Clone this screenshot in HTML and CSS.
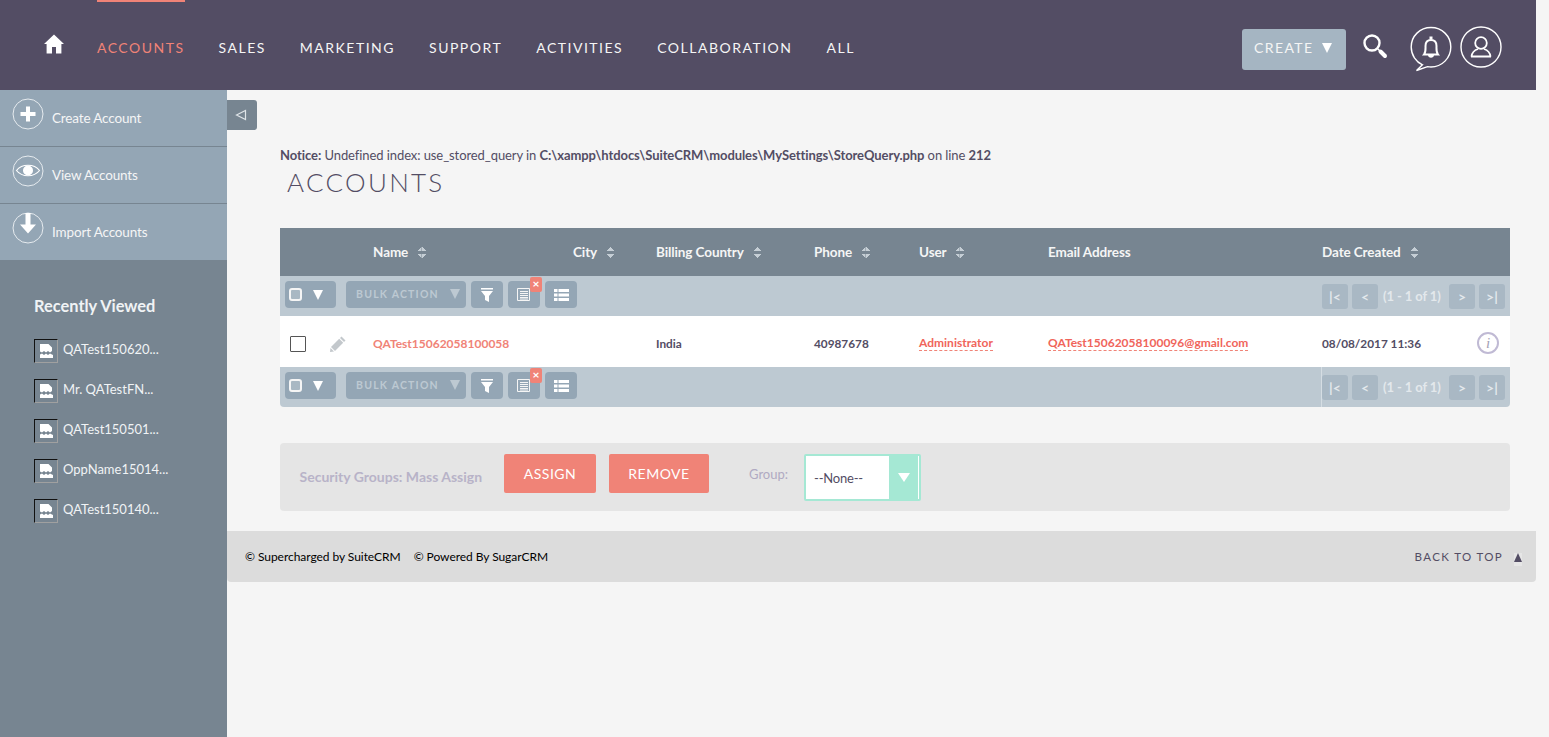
FILE: index.html
```html
<!DOCTYPE html>
<html lang="en">
<head>
    <meta charset="UTF-8">
    <title>Accounts</title>
    <link rel="stylesheet" href="styles.css">
</head>
<body>

    <header class="topbar">
        <a class="home" href="#">
            <svg width="22" height="20" viewBox="0 0 22 20"><path fill="#fff" d="M11 0.5 L21 10 L18.4 10 L18.4 19.5 L13 19.5 L13 13 L9 13 L9 19.5 L3.6 19.5 L3.6 10 L1 10 Z"/></svg>
        </a>
        <nav class="nav">
            <a class="nav-item active" href="#">ACCOUNTS</a>
            <a class="nav-item" href="#">SALES</a>
            <a class="nav-item" href="#">MARKETING</a>
            <a class="nav-item" href="#">SUPPORT</a>
            <a class="nav-item" href="#">ACTIVITIES</a>
            <a class="nav-item" href="#">COLLABORATION</a>
            <a class="nav-item" href="#">ALL</a>
        </nav>
        <div class="top-tools">
            <button class="create-btn">CREATE <span class="create-arrow"></span></button>
            <svg class="search-icon" width="26" height="26" viewBox="0 0 26 26"><circle cx="10" cy="10" r="7.5" fill="none" stroke="#fff" stroke-width="2.4"/><path d="M16 16 L23 23" stroke="#fff" stroke-width="1.5"/><path d="M18.5 18.5 L23 23" stroke="#fff" stroke-width="4" stroke-linecap="round"/></svg>
            <svg class="bell-icon" width="42" height="46" viewBox="0 0 42 46"><path fill="none" stroke="#fff" stroke-width="1.4" d="M21 1.5 C10 1.5 1.2 10 1.2 21 C1.2 29 6 36 12.5 38.8 L6.5 44.5 L17.5 40.6 C18.6 40.8 19.8 41 21 41 C32 41 40.8 32 40.8 21 C40.8 10 32 1.5 21 1.5 Z"/><path fill="none" stroke="#fff" stroke-width="2" d="M14 28.5 C16 26 15.5 23 15.5 20 C15.5 16 18 14 21 14 C24 14 26.5 16 26.5 20 C26.5 23 26 26 28 28.5 Z"/><path fill="#fff" d="M19.5 10.5 h3 v3 h-3 Z M18 29 h6 C24 32.500 18 32.500 18 29 Z"/></svg>
            <svg class="user-icon" width="42" height="42" viewBox="0 0 42 42"><circle cx="21" cy="21" r="20" fill="none" stroke="#fff" stroke-width="1.4"/><circle cx="21" cy="17" r="5.800" fill="none" stroke="#fff" stroke-width="1.8"/><path fill="none" stroke="#fff" stroke-width="1.8" d="M11.500 30.500 C12 26 15 24 18 23 M30.500 30.500 C30 26 27 24 24 23 M11 30.500 H31"/></svg>
        </div>
    </header>

    <div class="page">
        <aside class="sidebar">
            <a class="side-action" href="#">
                <svg width="32" height="32" viewBox="0 0 32 32"><circle cx="16" cy="16" r="15" fill="none" stroke="#e6ebef" stroke-width="1"/><path fill="#fff" d="M14 8.500 h4 v5.500 h5.500 v4 h-5.500 v5.500 h-4 v-5.500 h-5.500 v-4 h5.500 Z"/></svg>
                <span>Create Account</span>
            </a>
            <a class="side-action" href="#">
                <svg width="32" height="32" viewBox="0 0 32 32"><circle cx="16" cy="16" r="15" fill="none" stroke="#e6ebef" stroke-width="1"/><path fill="none" stroke="#fff" stroke-width="1.2" d="M4.500 15.500 C10 8.500 22 8.500 27.500 15.500 C22 22.500 10 22.500 4.500 15.500 Z"/><circle cx="16" cy="15.500" r="5" fill="#fff"/></svg>
                <span>View Accounts</span>
            </a>
            <a class="side-action" href="#">
                <svg width="32" height="32" viewBox="0 0 32 32"><circle cx="16" cy="16" r="15" fill="none" stroke="#e6ebef" stroke-width="1"/><path fill="#fff" d="M13.500 1 h5 v11.500 h5.500 l-8 9 l-8 -9 h5.500 Z"/></svg>
                <span>Import Accounts</span>
            </a>
            <h3 class="recent-title">Recently Viewed</h3>
            <ul class="recent-list">
                <li><span class="broken-img"><svg width="13" height="14" viewBox="0 0 13 14"><path fill="#fff" d="M0 0 h8.500 l3.500 3.500 v3.500 l-2 1.500 l-2 -1.500 l-2 1.500 l-2 -1.500 l-2 1.500 l-2 -1 Z M0 10.500 l2 -1 l2 1.500 l2 -1.500 l2 1.500 l2 -1.500 l3 1.500 v3.500 h-13 Z"/></svg></span>QATest150620...</li>
                <li><span class="broken-img"><svg width="13" height="14" viewBox="0 0 13 14"><path fill="#fff" d="M0 0 h8.500 l3.500 3.500 v3.500 l-2 1.500 l-2 -1.500 l-2 1.500 l-2 -1.500 l-2 1.500 l-2 -1 Z M0 10.500 l2 -1 l2 1.500 l2 -1.500 l2 1.500 l2 -1.500 l3 1.500 v3.500 h-13 Z"/></svg></span>Mr. QATestFN...</li>
                <li><span class="broken-img"><svg width="13" height="14" viewBox="0 0 13 14"><path fill="#fff" d="M0 0 h8.500 l3.500 3.500 v3.500 l-2 1.500 l-2 -1.500 l-2 1.500 l-2 -1.500 l-2 1.500 l-2 -1 Z M0 10.500 l2 -1 l2 1.500 l2 -1.500 l2 1.500 l2 -1.500 l3 1.500 v3.500 h-13 Z"/></svg></span>QATest150501...</li>
                <li><span class="broken-img"><svg width="13" height="14" viewBox="0 0 13 14"><path fill="#fff" d="M0 0 h8.500 l3.500 3.500 v3.500 l-2 1.500 l-2 -1.500 l-2 1.500 l-2 -1.500 l-2 1.500 l-2 -1 Z M0 10.500 l2 -1 l2 1.500 l2 -1.500 l2 1.500 l2 -1.500 l3 1.500 v3.500 h-13 Z"/></svg></span>OppName15014...</li>
                <li><span class="broken-img"><svg width="13" height="14" viewBox="0 0 13 14"><path fill="#fff" d="M0 0 h8.500 l3.500 3.500 v3.500 l-2 1.500 l-2 -1.500 l-2 1.500 l-2 -1.500 l-2 1.500 l-2 -1 Z M0 10.500 l2 -1 l2 1.500 l2 -1.500 l2 1.500 l2 -1.500 l3 1.500 v3.500 h-13 Z"/></svg></span>QATest150140...</li>
            </ul>
        </aside>

        <main class="main">
            <div class="collapse-tab">
                <svg width="12" height="12" viewBox="0 0 12 12"><path fill="none" stroke="#dfe4e8" stroke-width="1.2" d="M1.500 6 L10.500 1.500 V10.500 Z"/></svg>
            </div>
            <div class="content">
                <p class="notice"><b>Notice:</b> Undefined index: use_stored_query in <b>C:\xampp\htdocs\SuiteCRM\modules\MySettings\StoreQuery.php</b> on line <b>212</b></p>
                <h2 class="page-title">ACCOUNTS</h2>

                <div class="list-wrap">
                    <div class="list-head">
                        <span class="col col-name">Name <i class="sort"></i></span>
                        <span class="col col-city">City <i class="sort"></i></span>
                        <span class="col col-country">Billing Country <i class="sort"></i></span>
                        <span class="col col-phone">Phone <i class="sort"></i></span>
                        <span class="col col-user">User <i class="sort"></i></span>
                        <span class="col col-email">Email Address</span>
                        <span class="col col-date">Date Created <i class="sort"></i></span>
                    </div>

                    <div class="list-actions">
                        <button class="tool tool-select"><span class="mini-check"></span><span class="arrow-white"></span></button>
                        <button class="tool tool-bulk">BULK ACTION <span class="arrow-dim"></span></button>
                        <button class="tool tool-icon"><svg width="12" height="14" viewBox="0 0 12 14"><path fill="#fff" d="M0 0 h12 v1.500 h-12 Z M0 3 h12 l-4 5 v6 l-4 -2 v-4 Z"/></svg></button>
                        <button class="tool tool-icon tool-saved"><svg width="13" height="13" viewBox="0 0 13 13"><path fill="none" stroke="#f5f5f5" stroke-width="1" d="M0.500 0.500 h12 v12 h-12 Z"/><path stroke="#f5f5f5" stroke-width="1" d="M3 3.500 h8 M3 5.500 h8 M3 7.500 h8 M3 9.500 h8 M3 11 h8"/></svg><span class="badge-x">×</span></button>
                        <button class="tool tool-icon"><svg width="15" height="12" viewBox="0 0 15 12"><path fill="#fff" d="M0 0 h3.500 v3 h-3.500 Z M4.500 0 h10.500 v3 h-10.500 Z M0 4.500 h3.500 v3 h-3.500 Z M4.500 4.500 h10.500 v3 h-10.500 Z M0 9 h3.500 v3 h-3.500 Z M4.500 9 h10.500 v3 h-10.500 Z"/></svg></button>
                        <div class="pager">
                            <span class="page-btn">|&lt;</span><span class="page-btn">&lt;</span>
                            <span class="page-count">(1 - 1 of 1)</span>
                            <span class="page-btn">&gt;</span><span class="page-btn">&gt;|</span>
                        </div>
                    </div>

                    <div class="list-row">
                        <span class="row-check"></span>
                        <svg class="row-edit" width="16" height="16" viewBox="0 0 16 16"><path fill="#c3c8cc" d="M11.500 0.500 L15.500 4.500 L14 6 L10 2 Z M9.200 2.800 L13.200 6.800 L5 15 L1 11 Z M0.500 12 L4 15.500 L0 16 Z"/></svg>
                        <a class="col col-name link-plain" href="#">QATest15062058100058</a>
                        <span class="col col-country">India</span>
                        <span class="col col-phone">40987678</span>
                        <a class="col col-user link-dash" href="#">Administrator</a>
                        <a class="col col-email link-dash" href="#">QATest15062058100096@gmail.com</a>
                        <span class="col col-date">08/08/2017 11:36</span>
                        <span class="info-icon">i</span>
                    </div>

                    <div class="list-actions list-actions-bottom">
                        <button class="tool tool-select"><span class="mini-check"></span><span class="arrow-white"></span></button>
                        <button class="tool tool-bulk">BULK ACTION <span class="arrow-dim"></span></button>
                        <button class="tool tool-icon"><svg width="12" height="14" viewBox="0 0 12 14"><path fill="#fff" d="M0 0 h12 v1.500 h-12 Z M0 3 h12 l-4 5 v6 l-4 -2 v-4 Z"/></svg></button>
                        <button class="tool tool-icon tool-saved"><svg width="13" height="13" viewBox="0 0 13 13"><path fill="none" stroke="#f5f5f5" stroke-width="1" d="M0.500 0.500 h12 v12 h-12 Z"/><path stroke="#f5f5f5" stroke-width="1" d="M3 3.500 h8 M3 5.500 h8 M3 7.500 h8 M3 9.500 h8 M3 11 h8"/></svg><span class="badge-x">×</span></button>
                        <button class="tool tool-icon"><svg width="15" height="12" viewBox="0 0 15 12"><path fill="#fff" d="M0 0 h3.500 v3 h-3.500 Z M4.500 0 h10.500 v3 h-10.500 Z M0 4.500 h3.500 v3 h-3.500 Z M4.500 4.500 h10.500 v3 h-10.500 Z M0 9 h3.500 v3 h-3.500 Z M4.500 9 h10.500 v3 h-10.500 Z"/></svg></button>
                        <div class="pager pager-ruled">
                            <span class="page-btn">|&lt;</span><span class="page-btn">&lt;</span>
                            <span class="page-count">(1 - 1 of 1)</span>
                            <span class="page-btn">&gt;</span><span class="page-btn">&gt;|</span>
                        </div>
                    </div>
                </div>

                <div class="mass-assign">
                    <span class="mass-label">Security Groups: Mass Assign</span>
                    <button class="btn-red btn-assign">ASSIGN</button>
                    <button class="btn-red btn-remove">REMOVE</button>
                    <span class="group-label">Group:</span>
                    <div class="group-select">
                        <span class="group-value">--None--</span>
                        <span class="group-arrow"></span>
                    </div>
                </div>
            </div>

            <footer class="footer">
                <span class="foot-credit">© Supercharged by SuiteCRM</span>
                <span class="foot-credit">© Powered By SugarCRM</span>
                <a class="back-top" href="#">BACK TO TOP <span class="up-arrow"></span></a>
            </footer>
        </main>
    </div>

</body>
</html>
```

FILE: styles.css
```css
* {
    box-sizing: border-box;
}

html, body {
    height: 100%;
}

body {
    margin: 0;
    background-color: #f5f5f5;
    font-family: Lato, "Open Sans", sans-serif;
    font-size: 13px;
    color: #534d64;
    overflow: hidden;
}

a {
    text-decoration: none;
    color: inherit;
}

button {
    font-family: inherit;
    border: none;
    padding: 0;
}

/* top bar */
.topbar {
    width: 1536px;
    height: 90px;
    background-color: #534d64;
    display: flex;
    align-items: flex-start;
}

.home {
    margin: 34px 0 0 43px;
    height: 20px;
    display: block;
}

.nav {
    display: flex;
    margin-left: 32px;
    gap: 35px;
}

.nav-item {
    height: 90px;
    padding-top: 40px;
    line-height: 16px;
    font-size: 14px;
    letter-spacing: 1.500px;
    color: #f5f5f5;
    margin-right: -1px;
}

.nav-item.active {
    color: #f08377;
    box-shadow: inset 0 2px 0 #f08377;
}

.top-tools {
    margin-left: auto;
    display: flex;
    align-items: flex-start;
    padding-right: 34px;
}

.create-btn {
    width: 104px;
    height: 41px;
    margin-top: 29px;
    background-color: #a5b5c2;
    border-radius: 3px;
    color: #f5f5f5;
    font-size: 14px;
    letter-spacing: 1.400px;
    display: flex;
    align-items: center;
    padding: 0 0 4px 12px;
    gap: 9px;
}

.create-arrow {
    width: 0;
    height: 0;
    border-left: 5.500px solid transparent;
    border-right: 5.500px solid transparent;
    border-top: 10px solid #fff;
}

.arrow-white {
    width: 0;
    height: 0;
    border-left: 5px solid transparent;
    border-right: 5px solid transparent;
    border-top: 10px solid #fff;
}

.search-icon {
    margin: 33px 0 0 16px;
}

.bell-icon {
    margin: 26px 0 0 22px;
}

.user-icon {
    margin: 26px 0 0 8px;
}

/* page columns */
.page {
    display: flex;
    height: 647px;
}

.sidebar {
    width: 227px;
    flex-shrink: 0;
    background-color: #778591;
}

.side-action {
    height: 57px;
    background-color: #94a6b5;
    border-bottom: 1px solid #778591;
    display: flex;
    align-items: flex-start;
    padding: 8px 0 0 12px;
    color: #f5f5f5;
    font-size: 13.500px;
    letter-spacing: -0.150px;
}

.side-action:nth-child(3) {
    height: 56px;
    border-bottom: none;
}

.side-action span {
    margin: 12px 0 0 8px;
    line-height: 16px;
}

.recent-title {
    margin: 36px 0 0 34px;
    font-size: 16.400px;
    line-height: 20px;
    font-weight: 700;
    color: #f0f3f5;
}

.recent-list {
    list-style: none;
    margin: 24px 0 0 34px;
    padding: 0;
    color: #f0f3f5;
    font-size: 13px;
}

.recent-list li {
    height: 40px;
    display: flex;
    align-items: flex-start;
    line-height: 18px;
    gap: 5px;
}

.broken-img {
    width: 24px;
    height: 24px;
    margin-top: -1px;
    border: 1px solid #a0a0a0;
    border-top-color: #111;
    border-left-color: #111;
    display: flex;
    align-items: center;
    justify-content: center;
}

/* main area */
.main {
    flex: 1;
    position: relative;
    min-width: 0;
}

.collapse-tab {
    position: absolute;
    left: 0;
    top: 10px;
    width: 30px;
    height: 30px;
    background-color: #778591;
    border-radius: 0 3px 3px 0;
    display: flex;
    align-items: center;
    justify-content: center;
    padding-right: 2px;
}

.content {
    padding: 57px 39px 0 53px;
}

.notice {
    margin: 0;
    font-size: 13px;
    line-height: 17px;
    letter-spacing: -0.080px;
}

.page-title {
    margin: 2px 0 0 7px;
    font-size: 26px;
    line-height: 32px;
    font-weight: 300;
    letter-spacing: 2.300px;
}

.list-wrap {
    margin-top: 30px;
    width: 1230px;
    border-radius: 0 0 4px 4px;
    overflow: hidden;
}

.list-head {
    height: 48px;
    background-color: #778591;
    display: flex;
    align-items: center;
    position: relative;
    color: #f5f5f5;
    font-weight: 700;
    font-size: 13.500px;
    letter-spacing: -0.100px;
}

.col {
    position: absolute;
    white-space: nowrap;
}

.col-name { left: 93px; }
.col-city { left: 293px; }
.col-country { left: 376px; }
.col-phone { left: 534px; }
.col-user { left: 639px; }
.col-email { left: 768px; }
.col-date { left: 1042px; }

.sort {
    display: inline-block;
    width: 9px;
    height: 11px;
    margin-left: 6px;
    vertical-align: -1px;
    background:
        linear-gradient(to bottom right, transparent 50%, #c5ced5 50%) 0 0 / 4.500px 4px no-repeat,
        linear-gradient(to bottom left, transparent 50%, #c5ced5 50%) 4.500px 0 / 4.500px 4px no-repeat,
        linear-gradient(to top right, transparent 50%, #c5ced5 50%) 0 7px / 4.500px 4px no-repeat,
        linear-gradient(to top left, transparent 50%, #c5ced5 50%) 4.500px 7px / 4.500px 4px no-repeat;
}

.list-actions {
    height: 40px;
    background-color: #bdc9d2;
    display: flex;
    align-items: flex-start;
    padding: 5px 0 0 5px;
    gap: 5px;
    position: relative;
}

.tool {
    height: 27px;
    background-color: #94a6b5;
    border-radius: 4px;
    display: flex;
    align-items: center;
    justify-content: center;
    position: relative;
}

.tool-select {
    width: 51px;
    margin-right: 5px;
    gap: 11px;
    justify-content: flex-start;
    padding-left: 4px;
}

.mini-check {
    width: 13px;
    height: 13px;
    border: 2px solid #f5f5f5;
    border-radius: 3px;
    background-color: #a9b8c3;
}

.tool-bulk {
    width: 120px;
    color: #bdc9d2;
    font-size: 10.500px;
    font-weight: 700;
    letter-spacing: 1.200px;
    gap: 11px;
    padding: 0 0 1px 4px;
}

.arrow-dim {
    width: 0;
    height: 0;
    border-left: 5px solid transparent;
    border-right: 5px solid transparent;
    border-top: 10px solid #bdc9d2;
}

.tool-icon {
    width: 32px;
}

.tool-saved svg {
    margin-right: 1px;
}

.badge-x {
    position: absolute;
    right: -2px;
    top: -4px;
    width: 12px;
    height: 15px;
    background-color: #f08377;
    border-radius: 2px;
    color: #fff;
    font-size: 12px;
    font-weight: 700;
    line-height: 14px;
    text-align: center;
}

.pager {
    position: absolute;
    right: 0;
    top: 0;
    height: 40px;
    padding: 8px 5px 0 1px;
    display: flex;
    align-items: flex-start;
    gap: 4px;
    color: #e3e8ec;
    font-weight: 700;
    font-size: 13px;
}

.pager-ruled {
    border-left: 1px solid #d5dde3;
    padding-left: 0;
}

.page-btn {
    width: 26px;
    height: 25px;
    background-color: #a9b8c4;
    border-radius: 3px;
    text-align: center;
    line-height: 25px;
    font-size: 14px;
}

.page-count {
    line-height: 25px;
    margin: 0 4px 0 1px;
    letter-spacing: -0.100px;
    width: 58px;
    white-space: nowrap;
}

.list-row {
    height: 51px;
    background-color: #fff;
    display: flex;
    align-items: center;
    position: relative;
    font-size: 11.800px;
    font-weight: 700;
    color: #534d64;
}

.row-check {
    position: absolute;
    left: 10px;
    top: 20px;
    width: 16px;
    height: 16px;
    border: 1px solid #555;
    border-radius: 1px;
}

.row-edit {
    position: absolute;
    left: 50px;
    top: 20px;
}

.list-row .col {
    top: 20px;
    line-height: 15px;
}

.link-plain {
    color: #f08377;
    font-size: 12px;
}

.link-dash {
    color: #f0655b;
    border-bottom: 1px dashed #f08377;
    font-size: 12px;
}

.list-row .link-dash {
    line-height: 14px;
}

.info-icon {
    position: absolute;
    right: 11px;
    top: 16px;
    width: 22px;
    height: 22px;
    border: 2px solid #c0bad4;
    border-radius: 50%;
    color: #a49fb5;
    font-family: "Liberation Serif", serif;
    font-style: italic;
    font-size: 15px;
    font-weight: 400;
    line-height: 18px;
    text-align: center;
}

/* mass assign */
.mass-assign {
    margin-top: 36px;
    width: 1230px;
    height: 68px;
    background-color: #e5e5e5;
    border-radius: 4px;
    display: flex;
    align-items: flex-start;
    padding: 11px 0 0 19.500px;
}

.mass-label {
    margin-top: 14px;
    line-height: 17px;
    font-size: 14px;
    font-weight: 700;
    color: #b8b3c8;
    width: 204.500px;
    white-space: nowrap;
}

.btn-red {
    height: 39px;
    background-color: #f08377;
    border-radius: 2px;
    color: #fff;
    font-size: 14px;
    letter-spacing: 0.500px;
}

.btn-assign {
    width: 92px;
}

.btn-remove {
    width: 100px;
    margin-left: 13px;
}

.group-label {
    margin: 12px 0 0 40px;
    line-height: 17px;
    color: #b0aac2;
    font-size: 13px;
}

.group-select {
    margin: 0 0 0 16px;
    width: 117px;
    height: 47px;
    background-color: #fff;
    border: 2px solid #a5e8d4;
    border-radius: 2px;
    display: flex;
    justify-content: space-between;
}

.group-value {
    padding: 13px 0 0 8px;
    line-height: 18px;
    font-size: 13px;
    letter-spacing: -0.200px;
}

.group-arrow {
    width: 29px;
    height: 43px;
    background-color: #a5e8d4;
    display: flex;
    align-items: center;
    justify-content: center;
    margin-right: 1px;
}

.group-arrow::after {
    content: "";
    border-left: 6px solid transparent;
    border-right: 6px solid transparent;
    border-top: 9px solid #fff;
}

/* footer */
.footer {
    margin-top: 20px;
    width: 1309px;
    height: 51px;
    background-color: #dcdcdc;
    border-radius: 0 0 4px 4px;
    display: flex;
    align-items: center;
    padding: 0 14px 0 18px;
    color: #000;
    font-size: 12px;
    letter-spacing: -0.050px;
    gap: 13px;
}

.back-top {
    margin-left: auto;
    color: #534d64;
    font-size: 11.500px;
    letter-spacing: 1.350px;
    display: flex;
    align-items: center;
    gap: 11px;
}

.up-arrow {
    width: 8px;
    height: 13px;
    margin-top: 5px;
    background-color: #e6e6e6;
    position: relative;
}

.up-arrow::before {
    content: "";
    position: absolute;
    left: 0;
    top: 0;
    border-left: 4px solid transparent;
    border-right: 4px solid transparent;
    border-bottom: 9px solid #534d64;
}
```
